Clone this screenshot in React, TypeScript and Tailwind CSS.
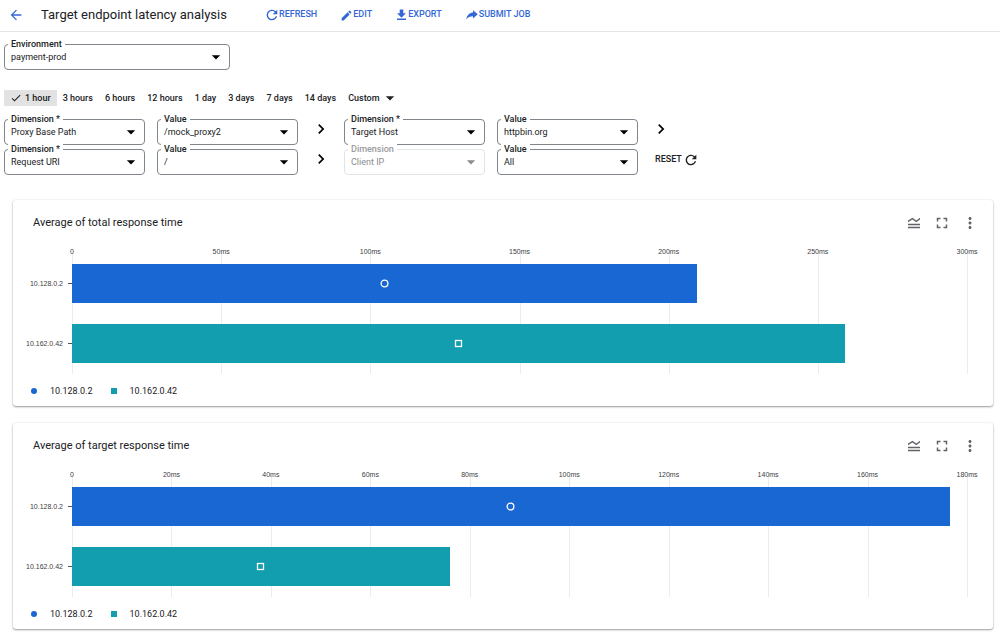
import React from 'react';
import {
  MdArrowBack,
  MdArrowDropDown,
  MdCheck,
  MdChevronRight,
  MdEdit,
  MdFullscreen,
  MdLegendToggle,
  MdMoreVert,
  MdRefresh,
} from 'react-icons/md';

interface SelectFieldProps {
  id: string;
  label: string;
  value: string;
  wide?: boolean;
  disabled?: boolean;
}

const SelectField: React.FC<SelectFieldProps> = ({ id, label, value, wide, disabled }) => (
  <div className={`relative h-[26px] shrink-0 ${wide ? 'w-[226px]' : 'w-[141px]'}`}>
    <select
      id={id}
      defaultValue={value}
      disabled={disabled}
      className="block w-full h-full appearance-none rounded-[4px] border border-[#80868b] bg-white pt-[2px] pl-[6px] pr-6 text-[9px] text-[#202124] disabled:border-[#e3e4e5] disabled:text-[#8a8b8d] disabled:opacity-100"
    >
      <option>{value}</option>
    </select>
    <label
      htmlFor={id}
      className={`absolute left-[4px] -top-[6px] bg-white px-[3px] text-[9px] leading-[12px] font-medium ${
        disabled ? 'text-[#9a9b9d]' : 'text-[#202124]'
      }`}
    >
      {label}
    </label>
    <MdArrowDropDown
      size={20}
      className={`pointer-events-none absolute right-[4px] top-[3px] ${disabled ? 'text-[#8a8b8d]' : 'text-black'}`}
    />
  </div>
);

const ExportIcon = () => (
  <svg width="11" height="12" viewBox="0 0 11 12" fill="currentColor">
    <path d="M3.700 .5h3.600v3.800h2.600L5.500 8.700 1.100 4.300h2.600zM1 9.500h9V11H1z" />
  </svg>
);

const SubmitIcon = () => (
  <svg width="12" height="12" viewBox="0 0 12 12" fill="currentColor">
    <path d="M7 1.200 11.800 5.300 7 9.500V7.200C4 7.200 1.800 8 .3 10.300 .8 6.600 3 3.900 7 3.500z" />
  </svg>
);

const actions = [
  { label: 'REFRESH', icon: <MdRefresh size={16} className="-mx-[2px]" /> },
  { label: 'EDIT', icon: <MdEdit size={13} className="-mx-px" /> },
  { label: 'EXPORT', icon: <ExportIcon /> },
  { label: 'SUBMIT JOB', icon: <SubmitIcon /> },
];

const ranges = ['1 hour', '3 hours', '6 hours', '12 hours', '1 day', '3 days', '7 days', '14 days'];

const Chevron = () => (
  <button aria-label="Next" className="flex w-[46px] justify-center text-black">
    <MdChevronRight size={20} />
  </button>
);

interface Series {
  name: string;
  value: number;
  color: string;
  round?: boolean;
}

interface ChartCardProps {
  title: string;
  max: number;
  step: number;
  series: Series[];
}

const ChartCard: React.FC<ChartCardProps> = ({ title, max, step, series }) => {
  const ticks = Array.from({ length: max / step + 1 }, (_, i) => i * step);

  return (
    <section className="rounded-[3px] bg-white pb-2 shadow-[0_1px_2px_rgba(0,0,0,0.38),0_0_2px_rgba(0,0,0,0.10)]">
      <div className="flex items-center justify-between pt-[14px] pl-5 pr-[14px]">
        <h2 className="text-[11px] leading-[18px] text-[#202124]">{title}</h2>
        <div className="flex gap-[10px] text-[#5f6368]">
          <button aria-label="Toggle legend"><MdLegendToggle size={18} /></button>
          <button aria-label="Full screen"><MdFullscreen size={18} /></button>
          <button aria-label="More options"><MdMoreVert size={18} /></button>
        </div>
      </div>

      {/* Plot */}
      <div className="relative mt-[20px] ml-[59px] mr-[26px] h-[122px]">
        {ticks.map((t) => (
          <div
            key={t}
            className="absolute inset-y-0 w-px bg-[#ececec]"
            style={{ left: `${(t / max) * 100}%` }}
          >
            <span className="absolute left-0 -top-[5px] -translate-x-1/2 font-['Liberation_Sans'] text-[7px] leading-[9px] text-[#3c4043]">
              {t === 0 ? '0' : `${t}ms`}
            </span>
          </div>
        ))}
        <div className="relative flex flex-col gap-[21px] pt-[12px]">
          {series.map((s) => (
            <div key={s.name} className="relative h-[39px]">
              <div className="absolute right-full inset-y-0 flex items-center gap-[5px] font-['Liberation_Sans'] text-[7px] leading-[9px] text-[#3c4043]">
                {s.name}
                <span className="h-px w-[4px] bg-[#555]" />
              </div>
              <div
                className="flex h-full items-center justify-center"
                style={{ width: `${(s.value / max) * 100}%`, backgroundColor: s.color }}
              >
                <svg width="9" height="9" viewBox="0 0 9 9" fill="none" stroke="white" strokeWidth="1.3">
                  {s.round ? <circle cx="4.500" cy="4.500" r="3.400" /> : <rect x="1.500" y="1.500" width="6" height="6" />}
                </svg>
              </div>
            </div>
          ))}
        </div>
      </div>

      {/* Legend */}
      <ul className="mt-[10px] flex pl-[18px] text-[9px] leading-[14px] text-[#202124]">
        {series.map((s) => (
          <li key={s.name} className="mr-[18px] flex items-center gap-[13px]">
            <span className={s.round ? 'size-[6px] rounded-full' : 'size-[6px]'} style={{ backgroundColor: s.color }} />
            {s.name}
          </li>
        ))}
      </ul>
    </section>
  );
};

export default function App() {
  return (
    <div className="min-h-screen bg-white font-[Roboto,sans-serif] text-[#202124]">
      <header className="flex h-8 items-center border-b border-[#e4e5e6] pb-[2px] pl-2 text-[#3367d6]">
        <a href="#" aria-label="Back"><MdArrowBack size={16} /></a>
        <h1 className="ml-[17px] text-[13px] text-[#202124]">Target endpoint latency analysis</h1>
        <nav className="ml-[39px] flex gap-6 pt-px">
          {actions.map((a) => (
            <button key={a.label} className="flex items-center gap-px text-[9px] font-medium whitespace-nowrap">
              {a.icon}
              {a.label}
            </button>
          ))}
        </nav>
      </header>

      <main>
        <div className="px-1 pt-3">
          <SelectField id="environment" label="Environment" value="payment-prod" wide />

          {/* Time range */}
          <div className="mt-5 flex text-[9px] leading-[16px] font-medium">
            {ranges.map((r, i) => (
              <button
                key={r}
                className={`flex items-center gap-[3px] px-[6px] whitespace-nowrap ${i === 0 ? 'bg-[#e2e2e2]' : ''}`}
              >
                {i === 0 && <MdCheck size={12} />}
                {r}
              </button>
            ))}
            <button className="flex items-center gap-px px-[6px]">
              Custom
              <MdArrowDropDown size={20} className="-my-1" />
            </button>
          </div>

          {/* Filters */}
          <div className="mt-[13px] flex flex-col gap-1">
            <div className="flex items-start">
              <SelectField id="dim1" label="Dimension *" value="Proxy Base Path" />
              <div className="w-3" />
              <SelectField id="val1" label="Value" value="/mock_proxy2" />
              <Chevron />
              <SelectField id="dim2" label="Dimension *" value="Target Host" />
              <div className="w-3" />
              <SelectField id="val2" label="Value" value="httpbin.org" />
              <Chevron />
            </div>
            <div className="flex items-start">
              <SelectField id="dim3" label="Dimension *" value="Request URI" />
              <div className="w-3" />
              <SelectField id="val3" label="Value" value="/" />
              <Chevron />
              <SelectField id="dim4" label="Dimension" value="Client IP" disabled />
              <div className="w-3" />
              <SelectField id="val4" label="Value" value="All" />
              <button className="ml-[17px] flex h-[22px] items-center gap-px text-[9px] font-medium">
                RESET
                <MdRefresh size={16} />
              </button>
            </div>
          </div>
        </div>

        <div className="mt-[25px] flex flex-col gap-[17px] pl-[13px] pr-[7px]">
          <ChartCard
            title="Average of total response time"
            max={300}
            step={50}
            series={[
              { name: '10.128.0.2', value: 209.5, color: '#1967d2', round: true },
              { name: '10.162.0.42', value: 259, color: '#129eaf' },
            ]}
          />
          <ChartCard
            title="Average of target response time"
            max={180}
            step={20}
            series={[
              { name: '10.128.0.2', value: 176.5, color: '#1967d2', round: true },
              { name: '10.162.0.42', value: 76, color: '#129eaf' },
            ]}
          />
        </div>
      </main>
    </div>
  );
}
